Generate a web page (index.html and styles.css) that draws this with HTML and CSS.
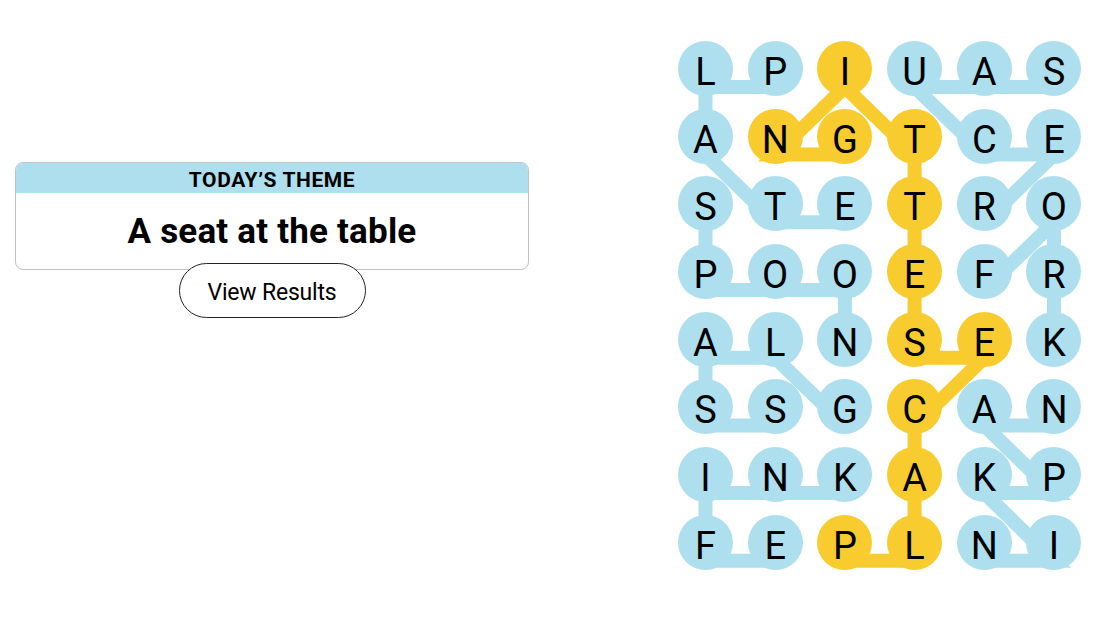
FILE: index.html
```html
<!DOCTYPE html>
<html lang="en">
<head>
<meta charset="utf-8">
<title>Strands</title>
<link rel="stylesheet" href="styles.css">
</head>
<body>
<main class="page">
  <section class="side">
    <div class="theme-card">
      <div class="theme-head">TODAY’S THEME</div>
      <div class="theme-body">A seat at the table</div>
    </div>
    <button class="results-btn" type="button">View Results</button>
  </section>

  <section class="board">
    <svg class="links" width="418" height="542" viewBox="0 0 418 542" aria-hidden="true">
      <g fill="none" stroke-width="14" stroke-linejoin="miter" stroke-linecap="butt">
        <g stroke="#aedfee">
          <polyline points="97.2,45.9 27.5,45.9 27.5,113.6 97.2,181.3 166.9,181.3"/>
          <polyline points="27.5,181.3 27.5,249 97.2,249 166.9,249 166.9,316.7"/>
          <polyline points="166.9,384.4 97.2,316.7 27.5,316.7 27.5,384.4 97.2,384.4"/>
          <polyline points="166.9,452.1 97.2,452.1 27.5,452.1 27.5,519.8 97.2,519.8"/>
          <polyline points="376,45.9 306.3,45.9 236.6,45.9 306.3,113.6 376,113.6 306.3,181.3"/>
          <polyline points="306.3,249 376,181.3 376,249 376,316.7"/>
          <polyline points="376,384.4 306.3,384.4 376,452.1 306.3,452.1 376,519.8 306.3,519.8"/>
        </g>
        <polyline stroke="#f8cc2e" points="166.9,519.8 236.6,519.8 236.6,452.1 236.6,384.4 306.3,316.7 236.6,316.7 236.6,249 236.6,181.3 236.6,113.6 166.9,45.9 97.2,113.6 166.9,113.6"/>
      </g>
    </svg>
    <div class="grid">
      <span class="cell">L</span><span class="cell">P</span><span class="cell gold">I</span><span class="cell">U</span><span class="cell">A</span><span class="cell">S</span>
      <span class="cell">A</span><span class="cell gold">N</span><span class="cell gold">G</span><span class="cell gold">T</span><span class="cell">C</span><span class="cell">E</span>
      <span class="cell">S</span><span class="cell">T</span><span class="cell">E</span><span class="cell gold">T</span><span class="cell">R</span><span class="cell">O</span>
      <span class="cell">P</span><span class="cell">O</span><span class="cell">O</span><span class="cell gold">E</span><span class="cell">F</span><span class="cell">R</span>
      <span class="cell">A</span><span class="cell">L</span><span class="cell">N</span><span class="cell gold">S</span><span class="cell gold">E</span><span class="cell">K</span>
      <span class="cell">S</span><span class="cell">S</span><span class="cell">G</span><span class="cell gold">C</span><span class="cell">A</span><span class="cell">N</span>
      <span class="cell">I</span><span class="cell">N</span><span class="cell">K</span><span class="cell gold">A</span><span class="cell">K</span><span class="cell">P</span>
      <span class="cell">F</span><span class="cell">E</span><span class="cell gold">P</span><span class="cell gold">L</span><span class="cell">N</span><span class="cell">I</span>
    </div>
  </section>
</main>
</body>
</html>
```

FILE: styles.css
```css
* { box-sizing: border-box; }

html, body {
  margin: 0;
  padding: 0;
  background: #ffffff;
}

body {
  font-family: Roboto, "Liberation Sans", Arial, sans-serif;
  color: #000000;
}

.page {
  display: flex;
  align-items: flex-start;
  width: 1098px;
  height: 618px;
  padding-left: 15px;
}

.side {
  width: 514px;
  margin-top: 162px;
  display: flex;
  flex-direction: column;
  align-items: center;
}

.theme-card {
  width: 514px;
  border: 1px solid #c3c3c3;
  border-radius: 8px;
  overflow: hidden;
}

.theme-head {
  height: 30px;
  background: #aedfee;
  text-align: center;
  font-weight: 700;
  font-size: 21px;
  line-height: 30px;
  padding-top: 2px;
  letter-spacing: 0.6px;
}

.theme-body {
  height: 76px;
  text-align: center;
  font-weight: 700;
  font-size: 35px;
  line-height: 78px;
  letter-spacing: 0.2px;
}

.results-btn {
  margin-top: -7px;
  width: 187px;
  height: 55px;
  border: 1px solid #222222;
  border-radius: 28px;
  background: #ffffff;
  font-family: Roboto, "Liberation Sans", Arial, sans-serif;
  font-size: 23px;
  color: #000000;
  padding: 3px 0 0 0;
  letter-spacing: -0.2px;
}

.board {
  position: relative;
  margin-left: 149px;
  margin-top: 41px;
  width: 418px;
  height: 542px;
}

.links {
  position: absolute;
  left: 0;
  top: 0;
  overflow: visible;
}

.grid {
  position: relative;
  display: grid;
  grid-template-columns: repeat(6, 55px);
  grid-auto-rows: 55px;
  column-gap: 14.7px;
  row-gap: 12.7px;
}

.cell {
  width: 55px;
  height: 55px;
  border-radius: 50%;
  background: #aedfee;
  text-align: center;
  font-size: 38px;
  line-height: 48px;
  padding-top: 7px;
  font-weight: 400;
}

.cell.gold {
  background: #f8cc2e;
}
```
